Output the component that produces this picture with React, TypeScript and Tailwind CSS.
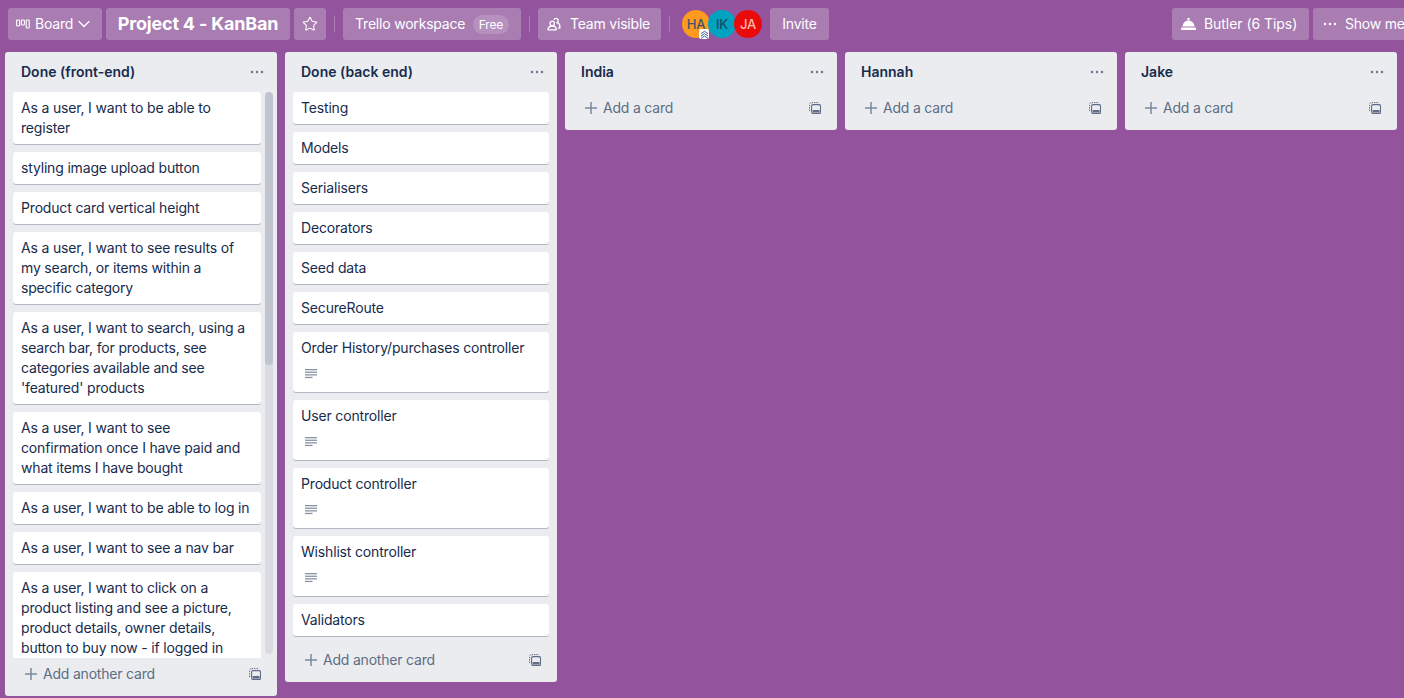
import { Star, ChevronDown } from "lucide-react";

const font = { fontFamily: '"Inter", "Noto Sans", sans-serif' };

function Dots({ className = "" }: { className?: string }) {
  return (
    <svg width="14" height="4" viewBox="0 0 14 4" className={className} fill="currentColor">
      <circle cx="2" cy="2" r="1.25" />
      <circle cx="7" cy="2" r="1.25" />
      <circle cx="12" cy="2" r="1.25" />
    </svg>
  );
}

function PlusIcon() {
  return (
    <svg width="14" height="14" viewBox="0 0 14 14" stroke="#7a869a" strokeWidth="1.5" fill="none">
      <path d="M7 1v12M1 7h12" />
    </svg>
  );
}

function BoardIcon() {
  return (
    <svg width="14" height="10" viewBox="0 0 14 10" fill="none" stroke="currentColor" strokeWidth="1.1">
      <rect x="0.6" y="1" width="3" height="6" rx="0.8" />
      <rect x="5.4" y="1" width="3" height="5" rx="0.8" />
      <rect x="10.2" y="1" width="3" height="8" rx="0.8" />
    </svg>
  );
}

function TeamIcon() {
  return (
    <svg width="14" height="14" viewBox="0 0 14 14" fill="none" stroke="currentColor" strokeWidth="1.3" strokeLinejoin="round">
      <circle cx="5.2" cy="6.4" r="2.2" />
      <path d="M1 12.800c0-2.400 1.700-3.600 4.200-3.600s4.200 1.200 4.200 3.600z" />
      <path d="M6.800 2.800c.5-.9 1.300-1.500 2.200-1.500 1.300 0 2.200 1 2.200 2.200 0 1-.5 1.800-1.300 2.200 1.800.4 2.900 1.800 3 3.800v1.500h-1.700" />
    </svg>
  );
}

function ButlerIcon() {
  return (
    <svg width="15" height="14" viewBox="0 0 15 14" fill="currentColor">
      <circle cx="7.500" cy="2" r="1.200" />
      <path d="M1.500 9.400C1.800 6 4.300 3.400 7.500 3.400s5.700 2.600 6 6z" />
      <rect x="0" y="10.600" width="15" height="2.400" rx="0.800" />
    </svg>
  );
}

function TemplateIcon() {
  return (
    <svg width="12" height="12" viewBox="0 0 12 12" fill="none" className="text-[#5e6c84]">
      <path d="M.6 9V2.400C.6 1.400 1.400.6 2.400.6H10" stroke="currentColor" strokeWidth="1" strokeDasharray="1.400 1" />
      <rect x="2.600" y="2.600" width="8.900" height="8.900" rx="1.400" fill="none" stroke="currentColor" strokeWidth="1.100" />
      <rect x="3.600" y="8" width="6.900" height="2.600" fill="currentColor" />
    </svg>
  );
}

function DescIcon() {
  return (
    <svg width="12" height="10" viewBox="0 0 12 10" fill="#8993a4">
      <rect x="0" y="0" width="12" height="1.300" />
      <rect x="0" y="2.600" width="12" height="1.300" />
      <rect x="0" y="5.200" width="12" height="1.300" />
      <rect x="0" y="7.800" width="7.500" height="1.300" />
    </svg>
  );
}

function Btn({ className = "", children }: { className?: string; children: React.ReactNode }) {
  return (
    <div className={`flex h-8 shrink-0 items-center rounded-[3px] bg-[#a97cb2] text-white ${className}`}>
      {children}
    </div>
  );
}

function Divider() {
  return (
    <div className="mx-1 flex h-8 items-center">
      <div className="h-4 w-px shrink-0 bg-[#a97cb2]" />
    </div>
  );
}

function Avatar({ label, bg, text, className = "", badge }: { label: string; bg: string; text: string; className?: string; badge?: boolean }) {
  return (
    <div className={`relative flex h-7 w-7 shrink-0 items-center justify-center rounded-full text-[13px] font-medium tracking-[-0.2px] ${bg} ${text} ${className}`}>
      {label}
      {badge && (
        <span className="absolute right-[1px] bottom-[-1px] flex h-[10px] w-[10px] items-center justify-center rounded-[2px] bg-white">
          <svg width="9" height="9" viewBox="0 0 9 9" fill="none" stroke="#3b5fa8" strokeWidth="1">
            <path d="M1 3.700 4.500 1.300 8 3.700M1 6 4.500 3.600 8 6M1 8.400 4.500 6 8 8.400" />
          </svg>
        </span>
      )}
    </div>
  );
}

function Card({ text, desc }: { text: string; desc?: boolean }) {
  return (
    <div className="mb-2 shrink-0 rounded-[3px] bg-white px-2 py-[6px] text-sm leading-5 tracking-[-0.17px] text-[#172b4d] shadow-[0_1px_0_#091e4240]">
      <div>{text}</div>
      {desc && (
        <div className="flex h-[28px] items-center pl-1 pt-[4px]">
          <DescIcon />
        </div>
      )}
    </div>
  );
}

function ListHeader({ title }: { title: string }) {
  return (
    <div className="flex h-10 shrink-0 items-center justify-between pl-4 pr-[13px] text-sm font-semibold text-[#172b4d]">
      <span>{title}</span>
      <Dots className="text-[#6b778c]" />
    </div>
  );
}

function ListFooter({ label }: { label: string }) {
  return (
    <div className="mx-2 mb-[6px] flex h-8 shrink-0 items-center justify-between pl-[11px] pr-2 text-sm tracking-[-0.2px] text-[#5e6c84]">
      <span className="flex items-center gap-[5px]">
        <PlusIcon />
        {label}
      </span>
      <TemplateIcon />
    </div>
  );
}

const front: string[] = [
  "As a user, I want to be able to register",
  "styling image upload button",
  "Product card vertical height",
  "As a user, I want to see results of my search, or items within a specific category",
  "As a user, I want to search, using a search bar, for products, see categories available and see 'featured' products",
  "As a user, I want to see confirmation once I have paid and what items I have bought",
  "As a user, I want to be able to log in",
  "As a user, I want to see a nav bar",
  "As a user, I want to click on a product listing and see a picture, product details, owner details, button to buy now - if logged in",
];

const back: { t: string; d?: boolean }[] = [
  { t: "Testing" },
  { t: "Models" },
  { t: "Serialisers" },
  { t: "Decorators" },
  { t: "Seed data" },
  { t: "SecureRoute" },
  { t: "Order History/purchases controller", d: true },
  { t: "User controller", d: true },
  { t: "Product controller", d: true },
  { t: "Wishlist controller", d: true },
  { t: "Validators" },
];

function EmptyList({ title }: { title: string }) {
  return (
    <div className="flex w-[272px] shrink-0 flex-col rounded-[3px] bg-[#ebecf0]">
      <ListHeader title={title} />
      <ListFooter label="Add a card" />
    </div>
  );
}

export default function App() {
  return (
    <div style={font} className="flex h-[698px] w-[1404px] flex-col overflow-hidden bg-[#93549d]">
      <div className="flex h-[52px] shrink-0 items-start gap-1 pl-2 pt-2 text-sm tracking-[-0.2px]">
        <Btn className="w-[94px] pl-2 pr-[8px]">
          <BoardIcon />
          <span className="ml-[5px]">Board</span>
          <ChevronDown size={20} strokeWidth={1.5} className="ml-auto" />
        </Btn>
        <Btn className="w-[184px] justify-center text-lg font-bold">Project 4 - KanBan</Btn>
        <Btn className="w-8 justify-center">
          <Star size={16} strokeWidth={1.6} />
        </Btn>
        <Divider />
        <Btn className="w-[178px] pl-3 pr-3">
          <span>Trello workspace</span>
          <span className="ml-auto rounded-full bg-[#b791be] px-[6px] py-[2px] text-xs leading-[15px]">Free</span>
        </Btn>
        <Divider />
        <Btn className="w-[123px] pl-[9px]">
          <TeamIcon />
          <span className="ml-[9px]">Team visible</span>
        </Btn>
        <Divider />
        <div className="ml-1 flex h-8 items-center">
          <Avatar label="HA" bg="bg-[#ff991f]" text="text-[#42526e]" badge />
          <Avatar label="IK" bg="bg-[#00a3bf]" text="text-[#1c4a66]" className="-ml-[2px]" />
          <Avatar label="JA" bg="bg-[#eb0a0a]" text="text-[#ffbdad]" className="-ml-[2px]" />
        </div>
        <Btn className="ml-1 w-[59px] justify-center">Invite</Btn>
        <Btn className="ml-auto w-[137px] pl-[9px]">
          <ButlerIcon />
          <span className="ml-2 tracking-[-0.05px]">Butler (6 Tips)</span>
        </Btn>
        <Btn className="-mr-[29px] w-[120px] pl-[10px]">
          <Dots className="shrink-0 text-white" />
          <span className="ml-[8px] whitespace-nowrap">Show menu</span>
        </Btn>
      </div>

      <div className="flex min-h-0 flex-1 items-start gap-2 pb-[2px] pl-[5px]">
        <div className="flex max-h-full w-[272px] shrink-0 flex-col rounded-[3px] bg-[#ebecf0]">
          <ListHeader title="Done (front-end)" />
          <div className="flex min-h-0 flex-1 pl-2">
            <div className="min-h-0 w-[248px] shrink-0 overflow-hidden">
              {front.map((t) => (
                <Card key={t} text={t} />
              ))}
            </div>
            <div className="mb-1 ml-1 w-2 shrink-0 overflow-hidden rounded-[4px] bg-[#dadbe2]">
              <div className="h-[273px] rounded-[4px] bg-[#bfc4ce]" />
            </div>
          </div>
          <ListFooter label="Add another card" />
        </div>

        <div className="flex w-[272px] shrink-0 flex-col rounded-[3px] bg-[#ebecf0]">
          <ListHeader title="Done (back end)" />
          <div className="px-2">
            {back.map((c) => (
              <Card key={c.t} text={c.t} desc={c.d} />
            ))}
          </div>
          <ListFooter label="Add another card" />
        </div>

        <EmptyList title="India" />
        <EmptyList title="Hannah" />
        <EmptyList title="Jake" />
      </div>
    </div>
  );
}
